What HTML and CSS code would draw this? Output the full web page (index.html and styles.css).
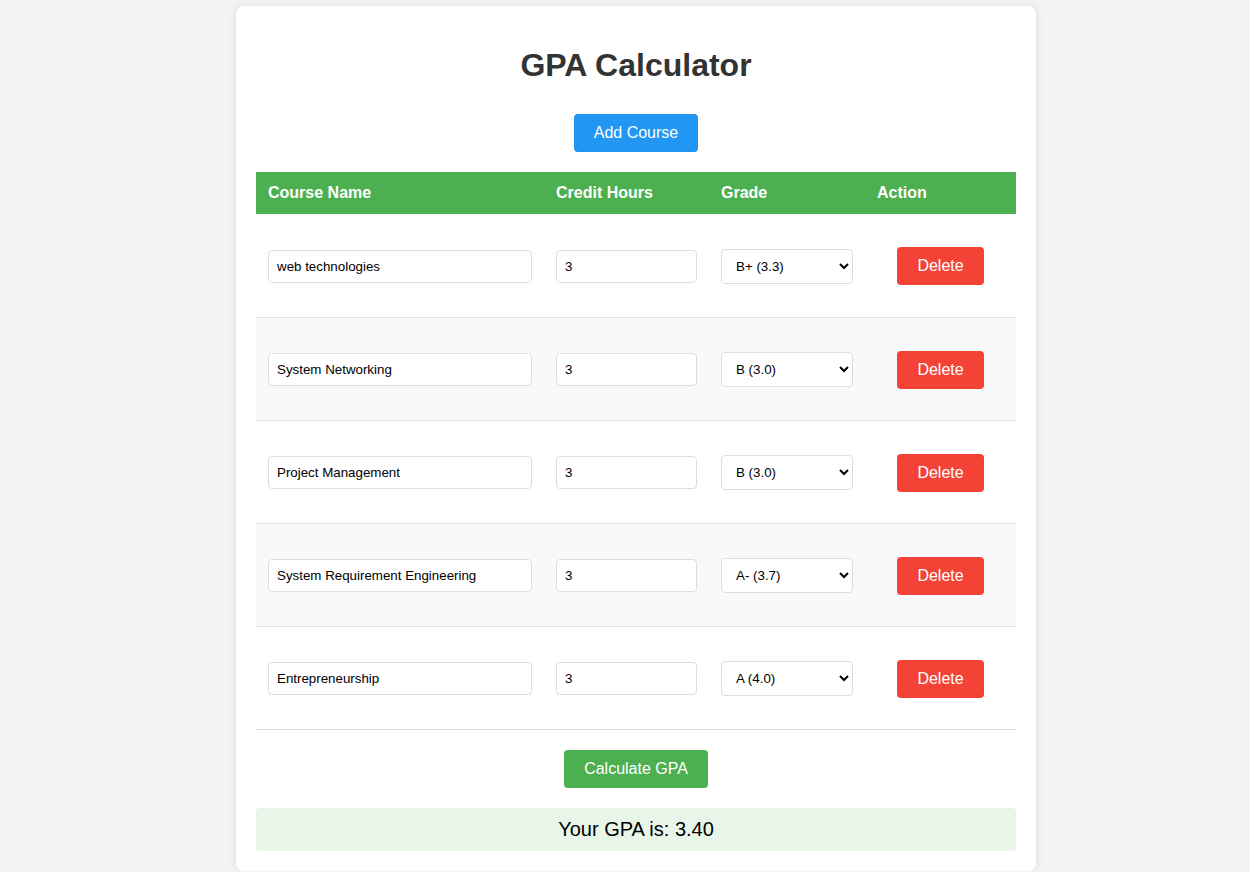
FILE: index.html
```html
<!DOCTYPE html>
<html>
<head>
<meta charset="utf-8">
<title>GPA Calculator</title>
<link rel="stylesheet" href="styles.css">
</head>
<body>
<div class="container">
  <h1>GPA Calculator</h1>
  <div class="center"><button class="btn btn-blue">Add Course</button></div>
  <table class="courses">
    <thead>
      <tr><th class="c1">Course Name</th><th class="c2">Credit Hours</th><th class="c3">Grade</th><th class="c4">Action</th></tr>
    </thead>
    <tbody>
      <tr>
        <td><input class="field" type="text" value="web technologies"></td>
        <td><input class="field" type="number" value="3"></td>
        <td><select class="field sel"><option>A (4.0)</option><option>A- (3.7)</option><option selected>B+ (3.3)</option><option>B (3.0)</option></select></td>
        <td class="act"><button class="btn btn-red">Delete</button></td>
      </tr>
      <tr>
        <td><input class="field" type="text" value="System Networking"></td>
        <td><input class="field" type="number" value="3"></td>
        <td><select class="field sel"><option>A (4.0)</option><option>A- (3.7)</option><option>B+ (3.3)</option><option selected>B (3.0)</option></select></td>
        <td class="act"><button class="btn btn-red">Delete</button></td>
      </tr>
      <tr>
        <td><input class="field" type="text" value="Project Management"></td>
        <td><input class="field" type="number" value="3"></td>
        <td><select class="field sel"><option>A (4.0)</option><option>A- (3.7)</option><option>B+ (3.3)</option><option selected>B (3.0)</option></select></td>
        <td class="act"><button class="btn btn-red">Delete</button></td>
      </tr>
      <tr>
        <td><input class="field" type="text" value="System Requirement Engineering"></td>
        <td><input class="field" type="number" value="3"></td>
        <td><select class="field sel"><option>A (4.0)</option><option selected>A- (3.7)</option><option>B+ (3.3)</option><option>B (3.0)</option></select></td>
        <td class="act"><button class="btn btn-red">Delete</button></td>
      </tr>
      <tr>
        <td><input class="field" type="text" value="Entrepreneurship"></td>
        <td><input class="field" type="number" value="3"></td>
        <td><select class="field sel"><option selected>A (4.0)</option><option>A- (3.7)</option><option>B+ (3.3)</option><option>B (3.0)</option></select></td>
        <td class="act"><button class="btn btn-red">Delete</button></td>
      </tr>
    </tbody>
  </table>
  <div class="center"><button class="btn btn-green">Calculate GPA</button></div>
  <div class="result">Your GPA is: 3.40</div>
</div>
</body>
</html>
```

FILE: styles.css
```css
* { box-sizing: border-box; }
html, body { margin: 0; }
body {
  background: #f4f4f4;
  font-family: "Liberation Sans", Arial, sans-serif;
  padding: 6px 0 0 22px;
}
.container {
  width: 800px;
  margin: 0 auto;
  background: #fff;
  padding: 20px;
  border-radius: 8px;
  box-shadow: 0 0 10px rgba(0,0,0,0.1);
}
h1 {
  text-align: center;
  color: #333;
  font-size: 32px;
  margin: 21px 0 30px;
  line-height: 37px;
}
.center { text-align: center; }
.btn {
  font-family: "Liberation Sans", Arial, sans-serif;
  font-size: 16px;
  line-height: 18px;
  color: #fff;
  border: none;
  border-radius: 4px;
  padding: 10px 20px;
  cursor: pointer;
}
.btn-blue { background: #2196F3; }
.btn-red { background: #f44336; }
.btn-green { background: #4CAF50; }
.courses {
  width: 760px;
  border-collapse: collapse;
  margin: 20px 0;
  table-layout: fixed;
}
.c1 { width: 288px; }
.c2 { width: 165px; }
.c3 { width: 156px; }
.c4 { width: 151px; }
.courses th {
  background: #4CAF50;
  color: #fff;
  text-align: left;
  font-size: 16px;
  line-height: 18px;
  padding: 12px;
}
.courses td {
  padding: 13px 12px 11px;
  height: 103px;
  border-bottom: 1px solid #ddd;
  vertical-align: middle;
}
.courses tbody tr:nth-child(even) { background: #f9f9f9; }
.act { text-align: center; }
.field {
  display: block;
  width: 100%;
  height: 33px;
  padding: 8px;
  border: 1px solid #ddd;
  border-radius: 4px;
  font-family: "Liberation Sans", Arial, sans-serif;
  font-size: 13.33px;
  color: #000;
  background: #fff;
}
.sel { height: 35px; padding: 8px 8px 8px 10px; }
.result {
  margin-top: 20px;
  background: #e8f5e9;
  border-radius: 4px;
  padding: 10px;
  text-align: center;
  font-size: 20px;
  line-height: 23px;
  color: #000;
}
```
